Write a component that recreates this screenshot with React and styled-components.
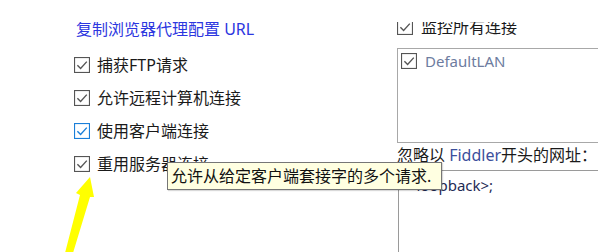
import React from "react"
import styled, { createGlobalStyle } from "styled-components"

const GlobalStyle = createGlobalStyle`
  html, body {
    margin: 0;
    padding: 0;
    background: #fff;
  }
  body {
    font-family: "Noto Sans", "Noto Sans CJK SC", sans-serif;
    color: #1a1a1a;
  }
`

const Screen = styled.div`
  position: relative;
  width: 598px;
  height: 252px;
  overflow: hidden;
  background: #fff;
`

const Viewport = styled.div`
  margin-top: 22px;
  height: 230px;
  overflow: hidden;
`

const Panel = styled.div`
  display: grid;
  grid-template-columns: 323px 1fr;
  padding-left: 74px;
  margin-top: -3px;
`

const Column = styled.div`
  display: flex;
  flex-direction: column;
  min-width: 0;
`

const LinkText = styled.div`
  height: 20px;
  line-height: 20px;
  font-size: 16px;
  color: #2d37e0;
  padding-left: 2px;
  margin-bottom: 9px;
  white-space: nowrap;
`

const Row = styled.label`
  display: flex;
  align-items: center;
  gap: ${(p) => p.$gap || 7}px;
  height: ${(p) => p.$height || 33}px;
  margin-top: ${(p) => p.$offset || 0}px;
  font-size: 16px;
  line-height: 20px;
  white-space: nowrap;
`

const Box = styled.svg`
  flex: none;
  width: 16px;
  height: 16px;
`

const ListBox = styled.div`
  margin-top: 11px;
  height: 95px;
  width: calc(100% + 20px);
  border: 1px solid #a8a8a8;
  padding: 3px 3px;
  box-sizing: border-box;
`

const ListItem = styled.div`
  display: flex;
  align-items: center;
  gap: 8px;
  height: 18px;
  font-size: 15px;
  color: #6d7ca0;
`

const Label = styled.div`
  margin-top: 2px;
  height: 20px;
  line-height: 20px;
  font-size: 16px;
  white-space: nowrap;
`

const Accent = styled.span`
  color: #3b4f9c;
`

const TextArea = styled.div`
  margin-top: 5px;
  height: 90px;
  margin-left: 1px;
  border-top: 1px solid #9a9a9a;
  border-left: 1px solid #9a9a9a;
  padding: 5px 4px;
  font-size: 15px;
  line-height: 18px;
  color: #1f2b55;
`

const Tooltip = styled.div`
  position: absolute;
  left: 167px;
  top: 162px;
  width: 275px;
  height: 28px;
  box-sizing: border-box;
  border: 1px solid #767676;
  background: #ffffe1;
  padding-left: 3px;
  font-size: 16px;
  line-height: 26px;
  color: #111;
  white-space: nowrap;
  box-shadow: 1px 1px 1px rgba(0, 0, 0, 0.15);
`

const Arrow = styled.svg`
  position: absolute;
  left: 60px;
  top: 170px;
  width: 40px;
  height: 82px;
`

const Check = ({ blue }) => {
  const c = blue ? "#1a7fd9" : "#555"
  return (
    <Box viewBox="0 0 16 16">
      <rect x="0.5" y="0.5" width="15" height="15" fill="#fff" stroke={c} strokeWidth="1.2" />
      <path d="M3.4 8.2 L6.6 11.4 L12.8 4.6" fill="none" stroke={c} strokeWidth="1.4" />
    </Box>
  )
}

const options = [
  { text: "捕获FTP请求" },
  { text: "允许远程计算机连接" },
  { text: "使用客户端连接", blue: true },
  { text: "重用服务器连接" },
]

const App = () => {
  return (
    <Screen>
      <GlobalStyle />
      <Viewport>
        <Panel>
          <Column>
            <LinkText>复制浏览器代理配置 URL</LinkText>
            {options.map((o) => (
              <Row key={o.text}>
                <Check blue={o.blue} />
                <span>{o.text}</span>
              </Row>
            ))}
          </Column>
          <Column>
            <Row $height={20} $offset={-2} $gap={8}>
              <Check />
              <span>监控所有连接</span>
            </Row>
            <ListBox>
              <ListItem>
                <Check />
                <span>DefaultLAN</span>
              </ListItem>
            </ListBox>
            <Label>
              忽略以 <Accent>Fiddler</Accent>开头的网址：
            </Label>
            <TextArea>&lt;-loopback&gt;;</TextArea>
          </Column>
        </Panel>
      </Viewport>
      <Tooltip>允许从给定客户端套接字的多个请求.</Tooltip>
      <Arrow viewBox="0 0 40 82">
        <polygon points="30,7 34,27 30,27 13,83 5,83 20,25 16,23" fill="#ffff00" />
      </Arrow>
    </Screen>
  )
}

export default App
